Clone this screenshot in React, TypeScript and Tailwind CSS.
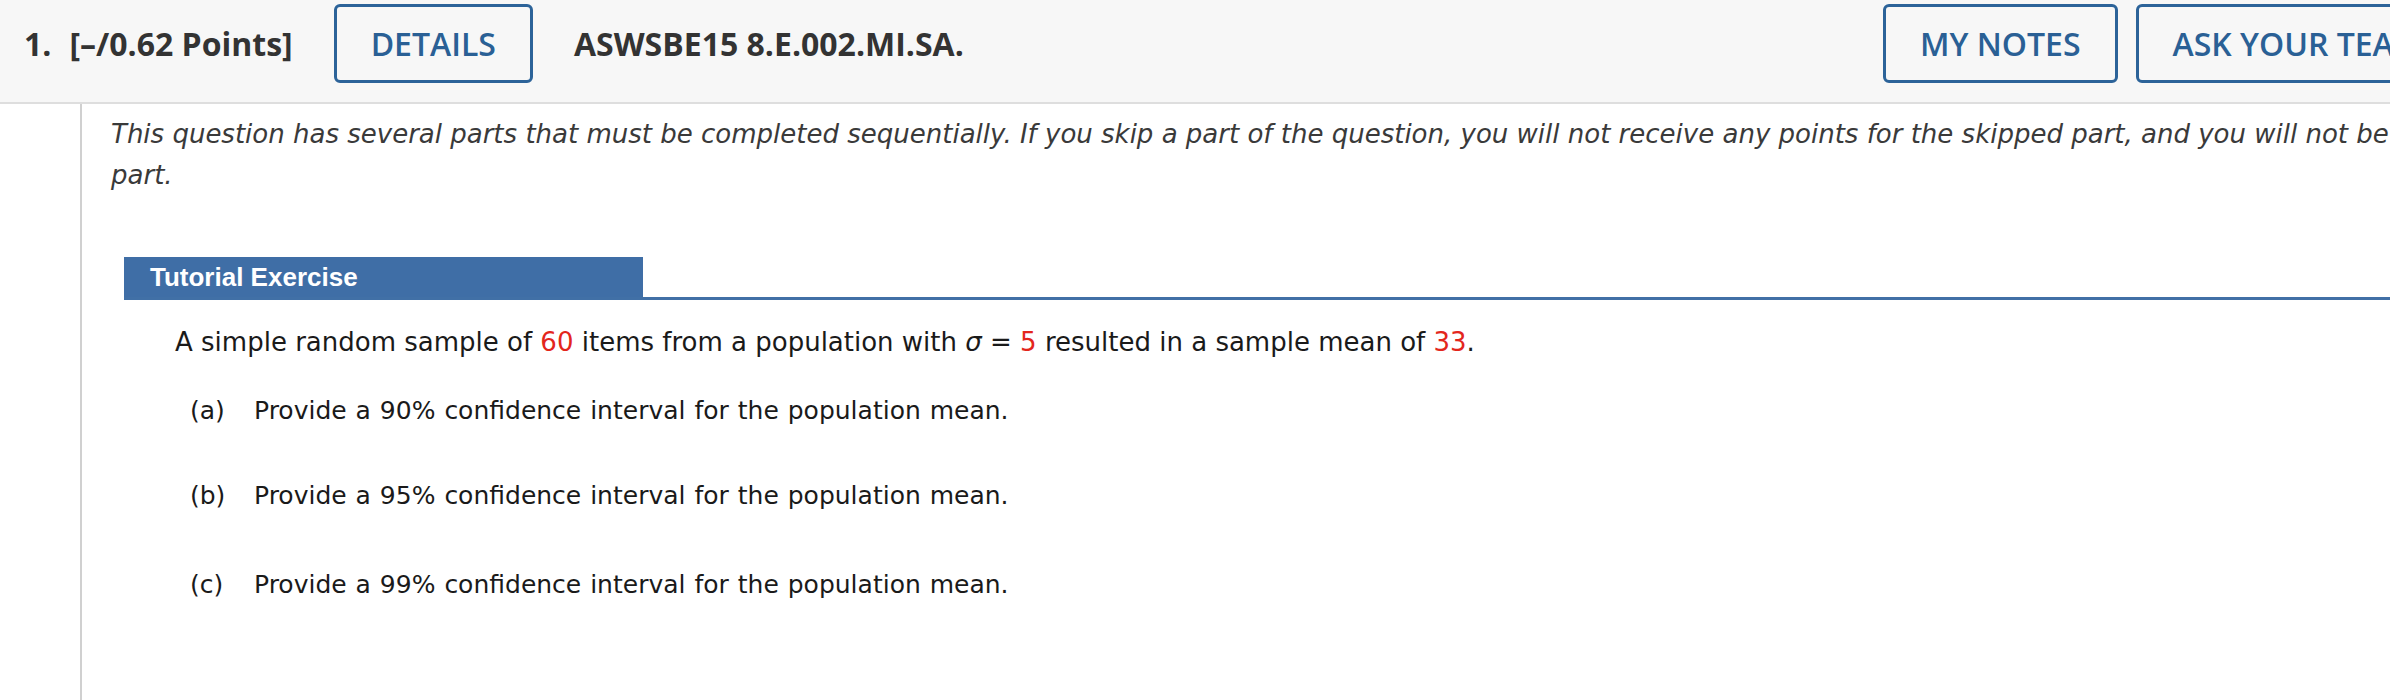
import type { ReactNode } from 'react';

const HEAD_FONT = { fontFamily: '"Open Sans", "Liberation Sans", sans-serif' };
const BODY_FONT = { fontFamily: '"DejaVu Sans", Verdana, sans-serif' };

function HeaderButton({ children }: { children: ReactNode }) {
  return (
    <button className="flex h-[79px] shrink-0 items-center whitespace-nowrap rounded-[6px] border-[3px] border-[#2c6399] px-[34px] text-[32px] font-semibold text-[#2a6095]">
      {children}
    </button>
  );
}

function Part({ label, children, className }: { label: string; children: ReactNode; className?: string }) {
  return (
    <div className={`flex h-[36px] items-center text-[25px] leading-[36px] [word-spacing:1px] ${className ?? ''}`}>
      <span className="w-[64px] shrink-0">{label}</span>
      <span>{children}</span>
    </div>
  );
}

const Red = ({ children }: { children: ReactNode }) => <span className="text-[#e3261c]">{children}</span>;

export default function App() {
  return (
    <div className="h-[700px] w-full overflow-hidden bg-white">
      <div className="w-[2900px]">
        {/* Question header */}
        <div
          className="flex h-[104px] items-start border-b-2 border-[#dedede] bg-[#f7f7f7] pl-[24px] pt-[4px] text-[#333333]"
          style={HEAD_FONT}
        >
          <div className="flex h-[79px] w-[1859px] shrink-0 items-center">
            <span className="text-[32px] font-bold">1.</span>
            <span className="ml-[18px] text-[32px] font-bold">[–/0.62 Points]</span>
            <div className="ml-[41px]">
              <HeaderButton>DETAILS</HeaderButton>
            </div>
            <span className="ml-[41px] text-[32px] font-bold">ASWSBE15 8.E.002.MI.SA.</span>
          </div>
          <div className="flex items-center gap-[18px]">
            <HeaderButton>MY NOTES</HeaderButton>
            <HeaderButton>ASK YOUR TEACHER</HeaderButton>
          </div>
        </div>

        {/* Question body */}
        <div className="flex h-[596px]">
          <div className="w-[80px] shrink-0" />
          <div className="flex-1 border-l-2 border-[#d0d0d0] pl-[29px] pt-[10px]" style={BODY_FONT}>
            <p className="w-[2755px] text-[26px] italic leading-[41px] text-[#3a3a3a]">
              This question has several parts that must be completed sequentially. If you skip a part of the question, you
              will not receive any points for the skipped part, and you will not be able to come back to the skipped
              part.
            </p>

            <div className="ml-[13px] mt-[64px]">
              <div className="flex h-[40px] items-end border-b-[3px] border-[#4170a6]">
                <div
                  className="flex h-[40px] w-[519px] items-center bg-[#3f6ea6] pl-[26px] text-[26px] font-bold text-white"
                  style={{ fontFamily: '"Liberation Sans", Arial, sans-serif' }}
                >
                  Tutorial Exercise
                </div>
              </div>

              <div className="pl-[51px] pt-[24px] text-[#1a1a1a]">
                <p className="h-[36px] text-[26px] leading-[36px]">
                  A simple random sample of <Red>60</Red> items from a population with <i>σ</i> = <Red>5</Red> resulted in a
                  sample mean of <Red>33</Red>.
                </p>
                <div className="pl-[15px]">
                  <Part label="(a)" className="mt-[33px]">
                    Provide a 90% confidence interval for the population mean.
                  </Part>
                  <Part label="(b)" className="mt-[49px]">
                    Provide a 95% confidence interval for the population mean.
                  </Part>
                  <Part label="(c)" className="mt-[53px]">
                    Provide a 99% confidence interval for the population mean.
                  </Part>
                </div>
              </div>
            </div>
          </div>
        </div>
      </div>
    </div>
  );
}
